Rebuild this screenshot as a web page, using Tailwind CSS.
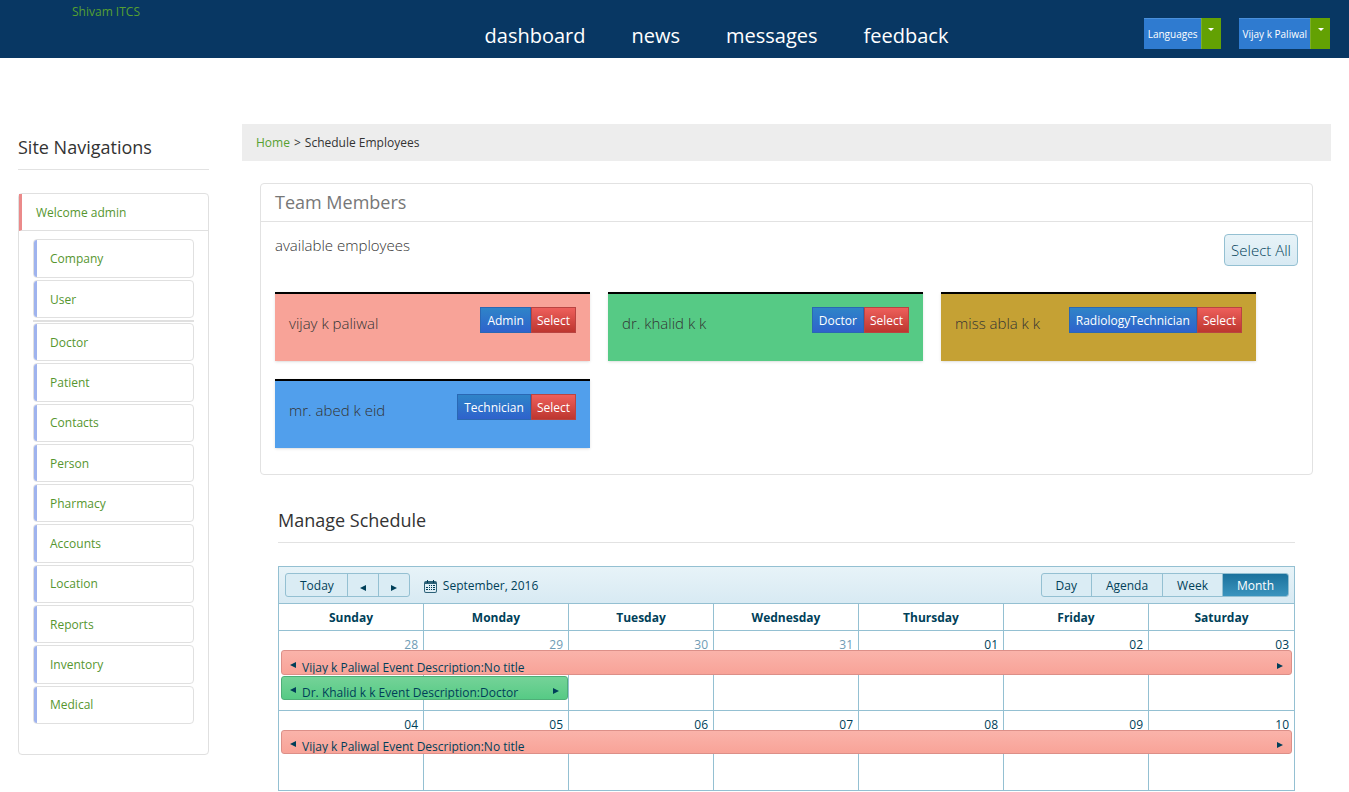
<!DOCTYPE html>
<html lang="en">
<head>
    <meta charset="UTF-8">
    <meta name="viewport" content="width=device-width, initial-scale=1.0">
    <title>Schedule Employees</title>
    <script src="https://cdn.jsdelivr.net/npm/@tailwindcss/browser@4"></script>
</head>
<body class="bg-white font-['Open_Sans','Noto_Sans',sans-serif] text-xs text-[#333]">

    <!-- Top bar -->
    <header class="grid h-[58px] grid-cols-[1fr_auto_1fr] bg-[#083763]">
        <a href="#" class="justify-self-start pl-[72px] pt-[3px] leading-[18px] text-[#56a031]">Shivam ITCS</a>
        <nav class="flex gap-[46px] pl-[84px] pt-[18px] text-xl leading-9 text-white">
            <a href="#">dashboard</a>
            <a href="#">news</a>
            <a href="#">messages</a>
            <a href="#">feedback</a>
        </nav>
        <div class="flex items-start justify-end gap-[18px] pr-[19px] pt-[18px] text-[10px] text-white">
            <div class="flex h-[31px]">
                <button type="button" class="border-t border-[#4a90dc] bg-[#2f7bd0] pl-1 pr-[3px] pt-px">Languages</button>
                <button type="button" aria-label="Open languages" class="flex w-5 justify-center border-l border-[#7cae2c] bg-[#63a103] pt-[10px]">
                    <svg width="6" height="3" viewBox="0 0 6 3" fill="currentColor"><path d="M0 0h6L3 3z"/></svg>
                </button>
            </div>
            <div class="flex h-[31px]">
                <button type="button" class="border-t border-[#4a90dc] bg-[#2f7bd0] pl-1 pr-[3px] pt-px">Vijay k Paliwal</button>
                <button type="button" aria-label="Open user menu" class="flex w-5 justify-center border-l border-[#7cae2c] bg-[#63a103] pt-[10px]">
                    <svg width="6" height="3" viewBox="0 0 6 3" fill="currentColor"><path d="M0 0h6L3 3z"/></svg>
                </button>
            </div>
        </div>
    </header>

    <div class="flex items-start gap-[33px] px-[18px] pt-[66px]">

        <!-- Sidebar -->
        <aside class="w-[191px] shrink-0">
            <h2 class="mb-[23px] border-b border-[#e2e2e2] pb-[9px] pt-[11px] text-lg leading-[25px]">Site Navigations</h2>
            <div class="rounded border border-[#e0e0e0] pb-[30px] text-[#56962f]">
                <a href="#" class="flex h-[37px] items-center border-b border-l-[3px] border-b-[#e0e0e0] border-l-[#eb8a8a] pl-3.5 pt-0.5">Welcome admin</a>
                <ul class="mx-3.5 mt-2 grid gap-0.5 border-b-2 border-[#e0e0e0] pb-0.5">
                    <li class="h-[39px] overflow-hidden rounded border border-[#e0e0e0]"><a href="#" class="flex h-full items-center border-l-[3px] border-[#9fb3ee] pl-[13px] pt-px">Company</a></li>
                    <li class="h-[38px] overflow-hidden rounded border border-[#e0e0e0]"><a href="#" class="flex h-full items-center border-l-[3px] border-[#9fb3ee] pl-[13px] pt-px">User</a></li>
                </ul>
                <ul class="mx-3.5 mt-px grid min-h-[401px] grid-rows-10 gap-0.5">
                    <li class="overflow-hidden rounded border border-[#e0e0e0]"><a href="#" class="flex h-full items-center border-l-[3px] border-[#9fb3ee] pl-[13px] pt-px">Doctor</a></li>
                    <li class="overflow-hidden rounded border border-[#e0e0e0]"><a href="#" class="flex h-full items-center border-l-[3px] border-[#9fb3ee] pl-[13px] pt-px">Patient</a></li>
                    <li class="overflow-hidden rounded border border-[#e0e0e0]"><a href="#" class="flex h-full items-center border-l-[3px] border-[#9fb3ee] pl-[13px] pt-px">Contacts</a></li>
                    <li class="overflow-hidden rounded border border-[#e0e0e0]"><a href="#" class="flex h-full items-center border-l-[3px] border-[#9fb3ee] pl-[13px] pt-px">Person</a></li>
                    <li class="overflow-hidden rounded border border-[#e0e0e0]"><a href="#" class="flex h-full items-center border-l-[3px] border-[#9fb3ee] pl-[13px] pt-px">Pharmacy</a></li>
                    <li class="overflow-hidden rounded border border-[#e0e0e0]"><a href="#" class="flex h-full items-center border-l-[3px] border-[#9fb3ee] pl-[13px] pt-px">Accounts</a></li>
                    <li class="overflow-hidden rounded border border-[#e0e0e0]"><a href="#" class="flex h-full items-center border-l-[3px] border-[#9fb3ee] pl-[13px] pt-px">Location</a></li>
                    <li class="overflow-hidden rounded border border-[#e0e0e0]"><a href="#" class="flex h-full items-center border-l-[3px] border-[#9fb3ee] pl-[13px] pt-px">Reports</a></li>
                    <li class="overflow-hidden rounded border border-[#e0e0e0]"><a href="#" class="flex h-full items-center border-l-[3px] border-[#9fb3ee] pl-[13px] pt-px">Inventory</a></li>
                    <li class="overflow-hidden rounded border border-[#e0e0e0]"><a href="#" class="flex h-full items-center border-l-[3px] border-[#9fb3ee] pl-[13px] pt-px">Medical</a></li>
                </ul>
            </div>
        </aside>

        <main class="min-w-0 flex-1">
            <div class="flex h-[37px] items-center gap-1 bg-[#ededed] px-3.5">
                <a href="#" class="text-[#56a031]">Home</a><span>&gt;</span><span>Schedule Employees</span>
            </div>

            <!-- Team members -->
            <section class="mx-[18px] mt-[22px] rounded border border-[#e2e2e2]">
                <h2 class="border-b border-[#e2e2e2] px-3.5 py-1.5 text-lg leading-[25px] text-[#777]">Team Members</h2>
                <div class="px-3.5 pb-[26px] pt-3">
                    <div class="flex items-start justify-between text-[15px] font-light">
                        <p class="leading-[22px]">available employees</p>
                        <button type="button" class="h-8 rounded border border-[#94c0d2] bg-linear-to-b from-[#e7f3f8] to-[#d8eaf3] px-1.5 text-[#003f59]">Select All</button>
                    </div>
                    <div class="mt-[26px] flex flex-wrap gap-[18px] text-[15px] font-light">
                        <div class="flex h-[69px] w-[315px] items-start justify-between border-t-2 border-black bg-[#f8a398] px-3.5 pt-[13px] shadow">
                            <span class="pt-1 leading-6">vijay k paliwal</span>
                            <span class="flex text-xs font-normal text-white">
                                <button type="button" class="h-[26px] border border-[#2a68b4] bg-linear-to-b from-[#2f84c8] to-[#2f62cc] px-1.5 pt-px">Admin</button>
                                <button type="button" class="h-[26px] border border-[#b94441] bg-linear-to-b from-[#ee5f5b] to-[#bd362f] px-[5px] pt-px">Select</button>
                            </span>
                        </div>
                        <div class="flex h-[69px] w-[315px] items-start justify-between border-t-2 border-black bg-[#56ca85] px-3.5 pt-[13px] shadow">
                            <span class="pt-1 leading-6">dr. khalid k k</span>
                            <span class="flex text-xs font-normal text-white">
                                <button type="button" class="h-[26px] border border-[#2a68b4] bg-linear-to-b from-[#2f84c8] to-[#2f62cc] px-1.5 pt-px">Doctor</button>
                                <button type="button" class="h-[26px] border border-[#b94441] bg-linear-to-b from-[#ee5f5b] to-[#bd362f] px-[5px] pt-px">Select</button>
                            </span>
                        </div>
                        <div class="flex h-[69px] w-[315px] items-start justify-between border-t-2 border-black bg-[#c5a134] px-3.5 pt-[13px] shadow">
                            <span class="pt-1 leading-6">miss abla k k</span>
                            <span class="flex text-xs font-normal text-white">
                                <button type="button" class="h-[26px] border border-[#2a68b4] bg-linear-to-b from-[#2f84c8] to-[#2f62cc] px-1.5 pt-px">RadiologyTechnician</button>
                                <button type="button" class="h-[26px] border border-[#b94441] bg-linear-to-b from-[#ee5f5b] to-[#bd362f] px-[5px] pt-px">Select</button>
                            </span>
                        </div>
                        <div class="flex h-[69px] w-[315px] items-start justify-between border-t-2 border-black bg-[#519fec] px-3.5 pt-[13px] shadow">
                            <span class="pt-1 leading-6">mr. abed k eid</span>
                            <span class="flex text-xs font-normal text-white">
                                <button type="button" class="h-[26px] border border-[#2a68b4] bg-linear-to-b from-[#2f84c8] to-[#2f62cc] px-1.5 pt-px">Technician</button>
                                <button type="button" class="h-[26px] border border-[#b94441] bg-linear-to-b from-[#ee5f5b] to-[#bd362f] px-[5px] pt-px">Select</button>
                            </span>
                        </div>
                    </div>
                </div>
            </section>

            <!-- Schedule -->
            <section class="mx-9 mt-[33px]">
                <h2 class="mb-[23px] border-b border-[#e2e2e2] pb-[9px] text-lg leading-[25px]">Manage Schedule</h2>
                <div class="border border-b-0 border-[#94c0d2] text-[#003f59]">
                    <div class="flex h-[37px] items-center border-b border-[#94c0d2] bg-linear-to-b from-[#e7f3f8] to-[#d8eaf3] pl-1.5 pr-[5px]">
                        <div class="flex h-6 divide-x divide-[#94c0d2] rounded-[3px] border border-[#94c0d2] bg-[#daecf4]">
                            <button type="button" class="pl-3.5 pr-[13px] pt-px">Today</button>
                            <button type="button" aria-label="Previous" class="px-3 pt-1.5"><svg width="6" height="6" viewBox="0 0 6 6" fill="currentColor"><path d="M6 0v6L0 3z"/></svg></button>
                            <button type="button" aria-label="Next" class="px-3 pt-1.5"><svg width="6" height="6" viewBox="0 0 6 6" fill="currentColor"><path d="M0 0v6l6-3z"/></svg></button>
                        </div>
                        <a href="#" class="ml-3.5 flex items-center gap-1.5 pt-px">
                            <svg class="mt-0.5" width="13" height="13" viewBox="0 0 13 13" fill="currentColor">
                                <path d="M2 1h9a2 2 0 0 1 2 2v8a2 2 0 0 1-2 2H2a2 2 0 0 1-2-2V3a2 2 0 0 1 2-2zM1 4v7a1 1 0 0 0 1 1h9a1 1 0 0 0 1-1V4z" fill-rule="evenodd" opacity=".8"/>
                                <path d="M3 0h1v3H3zM9 0h1v3H9z"/>
                                <path d="M5 5h1v1H5zM7 5h1v1H7zM9 5h2v1H9zM2 7h2v1H2zM5 7h1v1H5zM7 7h1v1H7zM9 7h2v1H9zM2 9h2v1H2zM5 9h1v1H5zM7 9h1v1H7zM9 9h2v1H9z"/>
                            </svg>
                            September, 2016
                        </a>
                        <div class="ml-auto flex h-6 divide-x divide-[#94c0d2] rounded-[3px] border border-[#94c0d2] bg-[#daecf4]">
                            <button type="button" class="px-3.5 pt-px">Day</button>
                            <button type="button" class="px-3.5 pt-px">Agenda</button>
                            <button type="button" class="px-3.5 pt-px">Week</button>
                            <button type="button" class="rounded-r-[2px] bg-linear-to-b from-[#1b729d] to-[#3a94be] px-3.5 pt-px text-white">Month</button>
                        </div>
                    </div>

                    <div class="relative">
                        <table class="w-full table-fixed border-separate border-spacing-0">
                            <thead>
                                <tr class="*:h-[27px] *:border-b *:border-r *:border-[#94c0d2] *:p-0 *:pt-0.5">
                                    <th>Sunday</th>
                                    <th>Monday</th>
                                    <th>Tuesday</th>
                                    <th>Wednesday</th>
                                    <th>Thursday</th>
                                    <th>Friday</th>
                                    <th class="border-r-0!">Saturday</th>
                                </tr>
                            </thead>
                            <tbody class="text-right">
                                <tr class="*:h-20 *:border-b *:border-r *:border-[#94c0d2] *:px-[5px] *:py-1.5 *:align-top">
                                    <td class="text-[#6f9cb5]">28</td>
                                    <td class="text-[#6f9cb5]">29</td>
                                    <td class="text-[#6f9cb5]">30</td>
                                    <td class="text-[#6f9cb5]">31</td>
                                    <td>01</td>
                                    <td>02</td>
                                    <td class="border-r-0!">03</td>
                                </tr>
                                <tr class="*:h-20 *:border-b *:border-r *:border-[#94c0d2] *:px-[5px] *:py-1.5 *:align-top">
                                    <td>04</td>
                                    <td>05</td>
                                    <td>06</td>
                                    <td>07</td>
                                    <td>08</td>
                                    <td>09</td>
                                    <td class="border-r-0!">10</td>
                                </tr>
                            </tbody>
                        </table>

                        <!-- Events lying over the month grid -->
                        <div class="absolute inset-x-0.5 top-[46px] flex h-[25px] items-center overflow-hidden rounded-[3px] border border-[#dc8f88] bg-linear-to-b from-[#fab3aa] to-[#f8a398] px-2">
                            <svg class="mt-1" width="6" height="6" viewBox="0 0 6 6" fill="currentColor"><path d="M6 0v6L0 3z"/></svg>
                            <span class="ml-1.5 mt-2.5 leading-4">Vijay k Paliwal Event Description:No title</span>
                            <svg class="ml-auto mt-1.5" width="6" height="6" viewBox="0 0 6 6" fill="currentColor"><path d="M0 0v6l6-3z"/></svg>
                        </div>
                        <div class="absolute left-0.5 top-[72px] flex h-6 w-[calc(2/7*100%-3px)] items-center overflow-hidden rounded-[3px] border border-[#4fae78] bg-linear-to-b from-[#74d398] to-[#56ca85] px-2">
                            <svg class="mt-1" width="6" height="6" viewBox="0 0 6 6" fill="currentColor"><path d="M6 0v6L0 3z"/></svg>
                            <span class="ml-1.5 mt-2.5 leading-4">Dr. Khalid k k Event Description:Doctor</span>
                            <svg class="ml-auto mt-1.5" width="6" height="6" viewBox="0 0 6 6" fill="currentColor"><path d="M0 0v6l6-3z"/></svg>
                        </div>
                        <div class="absolute inset-x-0.5 top-[126px] flex h-6 items-center overflow-hidden rounded-[3px] border border-[#dc8f88] bg-linear-to-b from-[#fab3aa] to-[#f8a398] px-2">
                            <svg class="mt-1" width="6" height="6" viewBox="0 0 6 6" fill="currentColor"><path d="M6 0v6L0 3z"/></svg>
                            <span class="ml-1.5 mt-2.5 leading-4">Vijay k Paliwal Event Description:No title</span>
                            <svg class="ml-auto mt-1.5" width="6" height="6" viewBox="0 0 6 6" fill="currentColor"><path d="M0 0v6l6-3z"/></svg>
                        </div>
                    </div>
                </div>
            </section>
        </main>
    </div>
</body>
</html>
